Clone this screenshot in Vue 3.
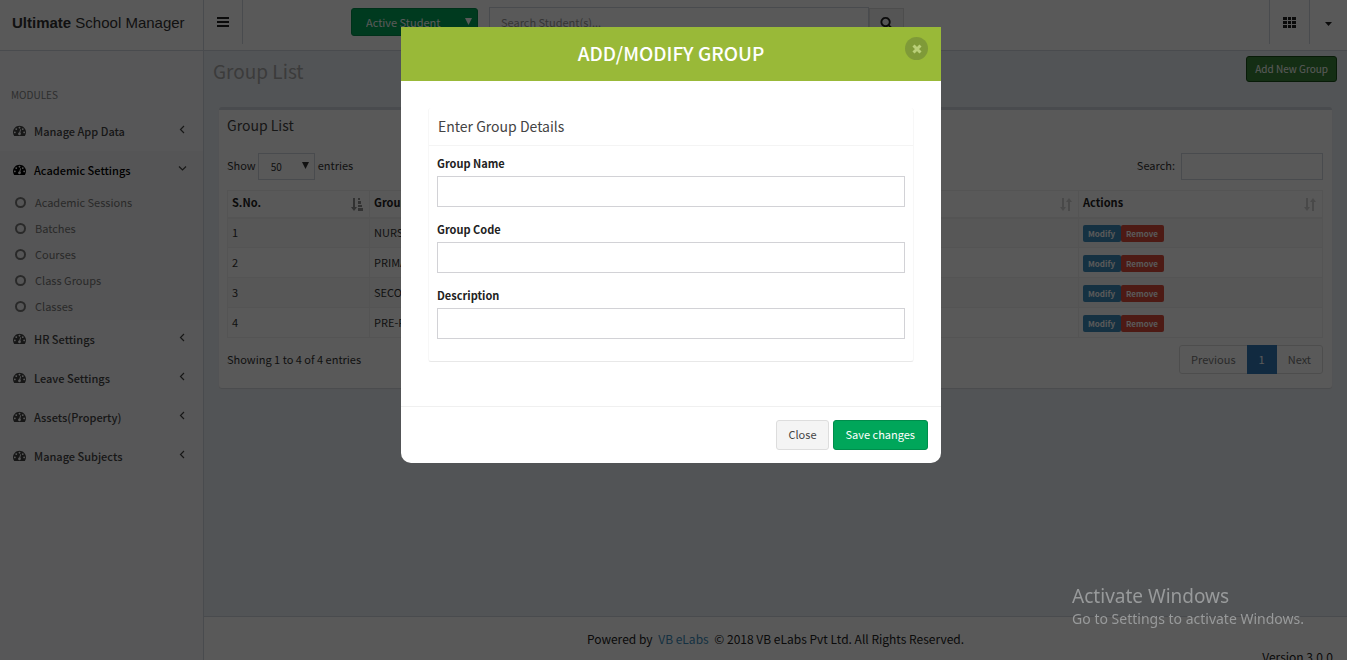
<script setup>
import { ref } from 'vue'

const modules = ref([
  { name: 'Manage App Data', open: false, children: [] },
  {
    name: 'Academic Settings',
    open: true,
    children: ['Academic Sessions', 'Batches', 'Courses', 'Class Groups', 'Classes'],
  },
  { name: 'HR Settings', open: false, children: [] },
  { name: 'Leave Settings', open: false, children: [] },
  { name: 'Assets(Property)', open: false, children: [] },
  { name: 'Manage Subjects', open: false, children: [] },
])

const columns = [
  { label: 'S.No.', cls: 'col-no', sorted: true },
  { label: 'Group Name', cls: 'col-name', sorted: false },
  { label: 'Group Code', cls: 'col-code', sorted: false },
  { label: 'Actions', cls: 'col-actions', sorted: false },
]

const groups = [
  { no: 1, name: 'NURSERY', code: 'NUR' },
  { no: 2, name: 'PRIMARY', code: 'PRI' },
  { no: 3, name: 'SECONDARY', code: 'SEC' },
  { no: 4, name: 'PRE-PRIMARY', code: 'PRE' },
]

const fields = [
  { id: 'group-name', label: 'Group Name' },
  { id: 'group-code', label: 'Group Code' },
  { id: 'description', label: 'Description' },
]

const form = ref({ 'group-name': '', 'group-code': '', description: '' })
</script>

<template>
  <div class="shell">
    <header class="topbar">
      <a class="brand" href="#"><b>Ultimate</b> School Manager</a>
      <button class="toggle" type="button" aria-label="Toggle navigation">
        <svg width="12" height="12" viewBox="0 0 12 12"><path d="M0 1h12v2H0zM0 5h12v2H0zM0 9h12v2H0z" /></svg>
      </button>
      <form class="finder" @submit.prevent>
        <span class="status">
          <select aria-label="Student status"><option>Active Student</option></select>
          <svg class="arrow" width="7" height="7" viewBox="0 0 7 7"><path d="M0 0h7L3.500 7z" /></svg>
        </span>
        <span class="lookup">
          <input type="text" placeholder="Search Student(s)..." aria-label="Search students" />
          <button type="submit" aria-label="Search">
            <svg width="13" height="13" viewBox="0 0 1792 1792"><path d="M1216 832q0-185-131.5-316.5t-316.5-131.5-316.5 131.5-131.5 316.5 131.5 316.5 316.5 131.5 316.5-131.5 131.5-316.5zm512 832q0 52-38 90t-90 38q-54 0-90-38l-343-342q-179 124-399 124-143 0-273.5-55.5t-225-150-150-225-55.5-273.5 55.5-273.5 150-225 225-150 273.5-55.5 273.5 55.5 225 150 150 225 55.5 273.5q0 220-124 399l343 343q37 37 37 90z" /></svg>
          </button>
        </span>
      </form>
      <div class="tools">
        <button type="button" aria-label="Applications">
          <svg width="13" height="11" viewBox="0 0 13 11"><path d="M0 0h4v3H0zM5 0h3v3H5zM9 0h4v3H9zM0 4h4v3H0zM5 4h3v3H5zM9 4h4v3H9zM0 8h4v3H0zM5 8h3v3H5zM9 8h4v3H9z" /></svg>
        </button>
        <button type="button" aria-label="Account menu">
          <svg width="7" height="4" viewBox="0 0 7 4"><path d="M0 0h7L3.500 4z" /></svg>
        </button>
      </div>
    </header>

    <div class="body">
      <nav class="sidebar">
        <h2>MODULES</h2>
        <ul>
          <li v-for="m in modules" :key="m.name" :class="{ open: m.open }">
            <a class="module" href="#">
              <svg class="gauge" width="13" height="13" viewBox="0 0 1792 1792"><path d="M384 1152q0-53-37.5-90.5t-90.5-37.5-90.5 37.5-37.5 90.5 37.5 90.5 90.5 37.5 90.5-37.5 37.5-90.5zm192-448q0-53-37.5-90.5t-90.5-37.5-90.5 37.5-37.5 90.5 37.5 90.5 90.5 37.5 90.5-37.5 37.5-90.5zm428 481l101-382q6-26-7.5-48.5t-38.5-29.5-48 6.5-30 39.5l-101 382q-60 5-107 43.5t-63 98.5q-20 77 20 146t117 89 146-20 89-117q16-60-6-117t-72-91zm660-33q0-53-37.5-90.5t-90.5-37.5-90.5 37.5-37.5 90.5 37.5 90.5 90.5 37.5 90.5-37.5 37.5-90.5zm-640-640q0-53-37.5-90.5t-90.5-37.5-90.5 37.5-37.5 90.5 37.5 90.5 90.5 37.5 90.5-37.5 37.5-90.5zm448 192q0-53-37.5-90.5t-90.5-37.5-90.5 37.5-37.5 90.5 37.5 90.5 90.5 37.5 90.5-37.5 37.5-90.5zm320 448q0 261-141 483-19 29-54 29h-1402q-35 0-54-29-141-221-141-483 0-182 71-348t191-286 286-191 348-71 348 71 286 191 191 286 71 348z" /></svg>
              <span>{{ m.name }}</span>
              <svg class="angle" width="9" height="9" viewBox="0 0 9 9">
                <path v-if="m.open" d="M1 2.500L4.500 6L8 2.500" />
                <path v-else d="M6 1L2.500 4.500L6 8" />
              </svg>
            </a>
            <ul v-if="m.open" class="children">
              <li v-for="c in m.children" :key="c">
                <a href="#">
                  <svg width="11" height="11" viewBox="0 0 11 11"><circle cx="5.500" cy="5.500" r="4.500" /></svg>
                  <span>{{ c }}</span>
                </a>
              </li>
            </ul>
          </li>
        </ul>
      </nav>

      <div class="page">
        <main>
          <div class="heading">
            <h1>Group List</h1>
            <button type="button">Add New Group</button>
          </div>

          <section class="box">
            <h3>Group List</h3>
            <div class="controls">
              <label class="length">
                <span class="word">Show</span>
                <span class="pick">
                  <select><option>50</option></select>
                  <svg class="arrow" width="7" height="7" viewBox="0 0 7 7"><path d="M0 0h7L3.500 7z" /></svg>
                </span>
                <span class="word">entries</span>
              </label>
              <label class="filter"><span class="word">Search:</span> <input type="search" /></label>
            </div>
            <table>
              <thead>
                <tr>
                  <th v-for="c in columns" :key="c.label" :class="c.cls" scope="col">
                    <div class="th">
                      {{ c.label }}
                      <svg v-if="c.sorted" class="sort on" width="12" height="13" viewBox="0 0 12 13"><path d="M2 0h2v9h2l-3 4-3-4h2zM7 0h2v2H7zM7 3h3v3H7zM7 7h4v2H7zM7 10h5v3H7z" /></svg>
                      <svg v-else class="sort" width="12" height="13" viewBox="0 0 12 13"><path d="M2 0h2v9h2l-3 4-3-4h2zM8 13h2V4h2L9 0 6 4h2z" /></svg>
                    </div>
                  </th>
                </tr>
              </thead>
              <tbody>
                <tr v-for="g in groups" :key="g.no">
                  <td>{{ g.no }}</td>
                  <td>{{ g.name }}</td>
                  <td>{{ g.code }}</td>
                  <td>
                    <div class="acts">
                      <button class="modify" type="button">Modify</button>
                      <button class="remove" type="button">Remove</button>
                    </div>
                  </td>
                </tr>
              </tbody>
            </table>
            <div class="summary">
              <p>Showing 1 to 4 of 4 entries</p>
              <nav class="pager" aria-label="Pages">
                <a href="#">Previous</a>
                <a class="current" href="#">1</a>
                <a href="#">Next</a>
              </nav>
            </div>
          </section>
        </main>

        <footer class="foot">
          <p>Powered by <a href="#">VB eLabs</a> © 2018 VB eLabs Pvt Ltd. All Rights Reserved.</p>
          <p class="version">Version 3.0.0</p>
        </footer>
      </div>
    </div>

    <div class="backdrop">
      <div class="dialog" role="dialog" aria-modal="true" aria-labelledby="dialog-title">
        <div class="dialog-head">
          <h2 id="dialog-title">ADD/MODIFY GROUP</h2>
          <button class="dismiss" type="button" aria-label="Dismiss">
            <svg width="10" height="10" viewBox="0 0 10 10"><path d="M1.500 1.500l7 7M8.500 1.500l-7 7" /></svg>
          </button>
        </div>
        <form class="dialog-body" @submit.prevent>
          <div class="panel">
            <h3>Enter Group Details</h3>
            <div class="fields">
              <div v-for="f in fields" :key="f.id" class="field">
                <label :for="f.id">{{ f.label }}</label>
                <input :id="f.id" v-model="form[f.id]" type="text" />
              </div>
            </div>
          </div>
        </form>
        <div class="dialog-foot">
          <button class="close" type="button">Close</button>
          <button class="save" type="button">Save changes</button>
        </div>
      </div>
    </div>

    <div class="watermark">
      <p class="big">Activate Windows</p>
      <p>Go to Settings to activate Windows.</p>
    </div>
  </div>
</template>

<style>
body {
  margin: 0;
  overflow: hidden;
}
</style>

<style scoped>
.shell,
.shell * {
  box-sizing: border-box;
}
.shell {
  height: 100vh;
  overflow: hidden;
  background: #fff;
  color: #222;
  font-family: 'Noto Sans CJK SC', 'Noto Sans', sans-serif;
  font-size: 11px;
  line-height: 18px;
}
h1, h2, h3, p, ul {
  margin: 0;
  padding: 0;
  font-weight: 400;
}
ul {
  list-style: none;
}
a {
  color: inherit;
  text-decoration: none;
}
button, input, select {
  margin: 0;
  padding: 0;
  border: 0;
  border-radius: 0;
  background: none;
  color: inherit;
  font: inherit;
}
select {
  appearance: none;
}
svg {
  display: block;
  flex: none;
  fill: currentColor;
}

/* top bar */
.topbar {
  display: flex;
  height: 51px;
  border-bottom: 1px solid #d2d6de;
}
.brand {
  width: 204px;
  padding-left: 12px;
  border-right: 1px solid #d2d6de;
  color: #333;
  font-family: 'Liberation Sans', Arial, sans-serif;
  font-size: 15px;
  line-height: 46px;
}
.toggle {
  width: 39px;
  height: 44px;
  padding-left: 13px;
  border-right: 1px solid #d2d6de;
  color: #222;
}
.finder {
  display: flex;
  align-items: flex-start;
  gap: 11px;
  margin: 7px 0 0 108px;
}
.status {
  position: relative;
  margin-top: 1px;
}
.status select {
  width: 127px;
  height: 28px;
  padding-left: 14px;
  border: 1px solid #008d4c;
  border-radius: 3px;
  background: #00a65a;
  color: #fff;
}
.arrow {
  position: absolute;
  top: 10px;
  right: 6px;
  pointer-events: none;
}
.status .arrow {
  color: #fff;
}
.lookup {
  display: flex;
}
.lookup input {
  width: 380px;
  height: 30px;
  padding: 0 11px;
  border: 1px solid #d2d6de;
}
.lookup input::placeholder {
  color: #999;
}
.lookup button {
  display: flex;
  justify-content: center;
  align-items: center;
  width: 35px;
  height: 28px;
  margin-top: 1px;
  border: 1px solid #ddd;
  background: #f4f4f4;
}
.tools {
  display: flex;
  height: 44px;
  margin-left: auto;
}
.tools button {
  display: flex;
  justify-content: center;
  align-items: center;
  width: 40px;
  border-left: 1px solid #d2d6de;
}
.tools button:last-child {
  width: 38px;
  padding-top: 4px;
}

/* sidebar */
.body {
  display: flex;
  align-items: stretch;
}
.sidebar {
  flex: none;
  width: 204px;
  border-right: 1px solid #d2d6de;
  background: #f9fafc;
}
.sidebar h2 {
  padding: 35px 0 8px 11px;
  color: #848484;
  font-size: 10px;
}
.module {
  display: flex;
  align-items: center;
  height: 39px;
  padding: 0 16px 2px 13px;
  color: #444;
  font-weight: 500;
}
.module span {
  flex: 1;
  padding-left: 8px;
}
.angle {
  margin-bottom: 2px;
  fill: none;
  stroke: #444;
  stroke-width: 1.2;
}
.open {
  background: #f4f4f5;
}
.open .module {
  color: #000;
}
.children a {
  display: flex;
  align-items: center;
  gap: 9px;
  height: 26px;
  padding: 0 0 2px 15px;
  color: #777;
}
.children svg {
  fill: none;
  stroke: currentColor;
  stroke-width: 2;
}

/* page */
.page {
  flex: 1;
  min-width: 0;
}
main {
  min-height: calc(100vh - 95px);
  padding: 5px 10px 0 9px;
  background: #ecf0f5;
}
.heading {
  display: flex;
  justify-content: space-between;
  align-items: flex-start;
}
h1 {
  color: #aaa;
  font-size: 19px;
  line-height: 30px;
}
.heading button {
  height: 26px;
  padding: 0 8px;
  border: 1px solid #194f19;
  border-radius: 3px;
  background: #398439;
  color: #fff;
  font-size: 10px;
}
.box {
  margin: 21px 5px 0 6px;
  padding: 0 9px 14px 8px;
  border-top: 3px solid #d2d6de;
  border-radius: 3px;
  background: #fff;
  box-shadow: 0 1px 1px rgba(0, 0, 0, 0.1);
}
.box h3 {
  color: #444;
  font-size: 14px;
  line-height: 30px;
}
.controls {
  display: flex;
  justify-content: space-between;
  height: 38px;
  padding-top: 1px;
  margin-top: 12px;
}
.length,
.filter {
  display: flex;
  align-items: center;
  height: 27px;
  color: #333;
}
.word {
  padding-bottom: 3px;
}
.pick {
  position: relative;
  margin: 0 3px 0 2px;
}
.pick select {
  width: 57px;
  height: 27px;
  padding-left: 12px;
  border: 1px solid #d2d6de;
  font-size: 10px;
}
.pick .arrow {
  top: 9px;
}
.filter {
  gap: 6px;
}
.filter input {
  width: 142px;
  height: 27px;
  border: 1px solid #d2d6de;
}
table {
  width: 100%;
  table-layout: fixed;
  border: 1px solid #f4f4f4;
  border-spacing: 0;
  border-collapse: collapse;
}
th,
td {
  padding: 0 4px 2px;
  border: 1px solid #f0f0f0;
  text-align: left;
}
th {
  height: 27px;
  padding-bottom: 3px;
  border-bottom-width: 2px;
  color: #222;
  font-weight: 700;
}
td {
  height: 30px;
  color: #333;
}
.col-no {
  width: 142px;
}
.col-actions {
  width: 244px;
}
.th {
  display: flex;
  justify-content: space-between;
  align-items: center;
}
.sort {
  margin: 5px 2px 0 0;
  opacity: 0.2;
}
.sort.on {
  opacity: 0.5;
}
tbody tr:nth-child(odd) {
  background: #f9f9f9;
}
.acts {
  display: flex;
  padding-top: 3px;
}
.acts button {
  height: 17px;
  padding: 0 6px 0 5px;
  border-radius: 2px;
  color: #fff;
  font-size: 8px;
  font-weight: 700;
}
.modify {
  background: #3c8dbc;
}
.remove {
  background: #dd4b39;
}
.summary {
  display: flex;
  justify-content: space-between;
  padding-top: 7px;
  color: #333;
}
.summary p {
  padding-top: 5px;
}
.pager {
  display: flex;
  border: 1px solid #ddd;
  border-radius: 3px;
  color: #777;
}
.pager a {
  padding: 0 11px;
  line-height: 27px;
}
.pager .current {
  margin: -1px 0;
  padding: 0 12px;
  background: #337ab7;
  color: #fff;
  line-height: 29px;
}

/* footer */
.foot {
  padding: 13px 14px 0;
  border-top: 1px solid #d2d6de;
  background: #fff;
  color: #222;
  font-size: 12px;
  text-align: center;
}
.foot a {
  margin: 0 3px;
  color: #3c8dbc;
}
.foot .version {
  text-align: right;
}

/* dialog */
.backdrop {
  position: fixed;
  inset: 0;
  padding: 27px 5px 0 0;
  background: rgba(0, 0, 0, 0.65);
}
.dialog {
  max-width: 540px;
  margin: 0 auto;
  border-radius: 0 0 10px 10px;
  background: #fff;
}
.dialog-head {
  position: relative;
  padding-bottom: 2px;
  background: #99b938;
  color: #fff;
  text-align: center;
}
.dialog-head h2 {
  font-size: 19px;
  font-weight: 500;
  line-height: 52px;
}
.dismiss {
  position: absolute;
  top: 10px;
  right: 13px;
  display: flex;
  justify-content: center;
  align-items: center;
  width: 23px;
  height: 23px;
  border-radius: 50%;
  background: #7f9a38;
  color: #b9cf78;
}
.dismiss svg {
  stroke: currentColor;
  stroke-width: 3;
}
.dialog-body {
  padding: 27px 27px 44px;
}
.panel {
  padding-bottom: 9px;
  border: 1px solid #f7f7f7;
  border-top: 0;
  border-bottom-color: #e8e8e8;
  border-radius: 3px;
}
.panel h3 {
  padding-left: 9px;
  border-bottom: 1px solid #f4f4f4;
  color: #444;
  font-size: 14px;
  line-height: 37px;
}
.fields {
  padding: 8px 8px 0;
}
.field {
  display: flex;
  flex-direction: column;
  gap: 4px;
  margin-bottom: 13px;
}
.field label {
  font-weight: 700;
}
.field input {
  height: 31px;
  padding: 0 10px;
  border: 1px solid #d2d2d6;
}
.dialog-foot {
  display: flex;
  justify-content: flex-end;
  gap: 4px;
  padding: 13px;
  border-top: 1px solid #f0f0f0;
}
.dialog-foot button {
  height: 30px;
  padding: 0 11px 2px;
  border: 1px solid #ddd;
  border-radius: 3px;
  background: #f4f4f4;
  color: #444;
}
.dialog-foot .save {
  padding: 0 12px 2px;
  border-color: #008d4c;
  background: #00a65a;
  color: #fff;
}

/* desktop notice, above the dialog */
.watermark {
  position: fixed;
  right: 43px;
  bottom: 30px;
  color: #989a9b;
  font-family: 'Noto Sans', 'Open Sans', sans-serif;
  font-size: 14px;
  line-height: 22px;
  pointer-events: none;
}
.watermark .big {
  font-size: 19px;
  line-height: 24px;
}
</style>
